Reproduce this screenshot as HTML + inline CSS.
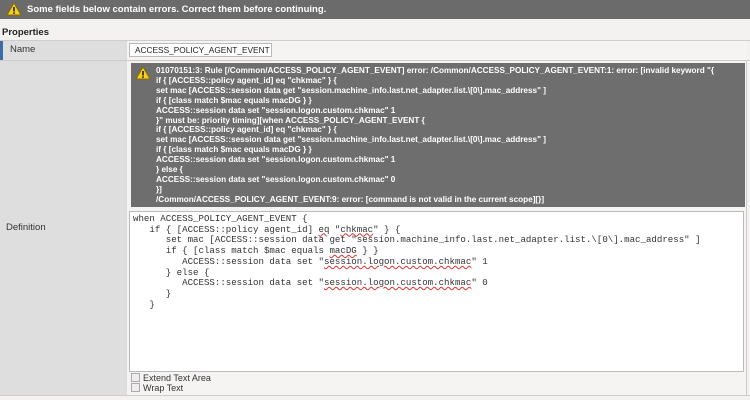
<!DOCTYPE html>
<html><head><style>
body{margin:0;width:750px;height:400px;background:#f3f2f0;font-family:"Liberation Sans",Arial,sans-serif;position:relative;overflow:hidden}
.top{position:absolute;left:0;top:0;width:750px;height:19px;background:#6b6b6b;color:#fff;font-weight:bold;font-size:9.5px;line-height:19px}
.top span{position:absolute;left:27px;top:0}
.warn{position:absolute}
.props{position:absolute;left:2px;top:27px;font-size:9.5px;font-weight:bold;color:#222}
.lab{position:absolute;left:0;width:127px;background:#dedede;font-size:9.5px;color:#333}
.right{position:absolute;left:127px;width:619px;background:#f5f4f2}
.err{position:absolute;left:131px;top:63px;width:614px;height:144px;background:#6e6e6e;color:#fff;font-weight:bold;font-size:8.2px;line-height:9.9px;overflow:hidden}
.err div{position:absolute;left:25px;top:3px;white-space:pre}
.ta{position:absolute;left:129px;top:211px;width:615px;height:161px;background:#fff;border:1px solid #bbb;box-sizing:border-box}
.ta pre{margin:0;position:absolute;left:3px;top:2px;font-family:"Liberation Mono",monospace;font-size:9.1px;line-height:10.7px;color:#333}
u{text-decoration:underline wavy #d33;text-decoration-thickness:1px}
.cb{position:absolute;left:131px;font-size:9px;color:#333}
.cb i{display:inline-block;width:7px;height:7px;border:1px solid #aaa;background:#eee;vertical-align:-1px;margin-right:3px}
</style></head><body>
<div class="top"><svg class="warn" style="left:6px;top:2px" width="16" height="14"><path d="M8 1L15 13H1Z" fill="#f5d020" stroke="#8a6a00" stroke-width="1"/><rect x="7.2" y="5" width="1.6" height="4.5" fill="#222"/><rect x="7.2" y="10.3" width="1.6" height="1.6" fill="#222"/></svg><span>Some fields below contain errors. Correct them before continuing.</span></div>
<div class="props">Properties</div>
<div style="position:absolute;left:0;top:40px;width:750px;height:1px;background:#ccc"></div>
<div class="lab" style="top:41px;height:19px;border-left:3px solid #3a6ea5;box-sizing:border-box;padding-left:7px;line-height:18px">Name</div>
<div class="right" style="top:41px;height:19px"></div>
<div style="position:absolute;left:129px;top:43px;width:143px;height:14px;background:#fff;border:1px solid #bbb;box-sizing:border-box;font-size:8.3px;line-height:12px;padding-left:5px;color:#222">ACCESS_POLICY_AGENT_EVENT</div>
<div style="position:absolute;left:0;top:60px;width:750px;height:1px;background:#ccc"></div>
<div class="lab" style="top:61px;height:334px;padding-left:6px;box-sizing:border-box"><div style="position:absolute;top:161px;left:6px">Definition</div></div>
<div class="right" style="top:61px;height:334px;border-right:1px solid #ccc"></div>
<div style="position:absolute;left:0;top:395px;width:750px;height:1px;background:#ccc"></div>
<div class="err"><svg class="warn" style="left:4px;top:3px" width="16" height="14"><path d="M8 1L15 13H1Z" fill="#f5d020" stroke="#8a6a00" stroke-width="1"/><rect x="7.2" y="5" width="1.6" height="4.5" fill="#222"/><rect x="7.2" y="10.3" width="1.6" height="1.6" fill="#222"/></svg><div>01070151:3: Rule [/Common/ACCESS_POLICY_AGENT_EVENT] error: /Common/ACCESS_POLICY_AGENT_EVENT:1: error: [invalid keyword "{
if { [ACCESS::policy agent_id] eq "chkmac" } {
set mac [ACCESS::session data get "session.machine_info.last.net_adapter.list.\[0\].mac_address" ]
if { [class match $mac equals macDG } }
ACCESS::session data set "session.logon.custom.chkmac" 1
}" must be: priority timing][when ACCESS_POLICY_AGENT_EVENT {
if { [ACCESS::policy agent_id] eq "chkmac" } {
set mac [ACCESS::session data get "session.machine_info.last.net_adapter.list.\[0\].mac_address" ]
if { [class match $mac equals macDG } }
ACCESS::session data set "session.logon.custom.chkmac" 1
} else {
ACCESS::session data set "session.logon.custom.chkmac" 0
}]
/Common/ACCESS_POLICY_AGENT_EVENT:9: error: [command is not valid in the current scope][}]</div></div>
<div class="ta"><pre>when ACCESS_POLICY_AGENT_EVENT {
   if { [ACCESS::policy agent_id] <u>eq</u> "<u>chkmac</u>" } {
      set mac [ACCESS::session data get "session.machine_info.last.net_adapter.list.\[0\].mac_address" ]
      if { [class match $mac equals <u>macDG</u> } }
         ACCESS::session data set "<u>session.logon.custom.chkmac</u>" 1
      } else {
         ACCESS::session data set "<u>session.logon.custom.chkmac</u>" 0
      }
   }</pre></div>
<div class="cb" style="top:373px"><i></i>Extend Text Area</div>
<div class="cb" style="top:383px"><i></i>Wrap Text</div>
</body></html>
